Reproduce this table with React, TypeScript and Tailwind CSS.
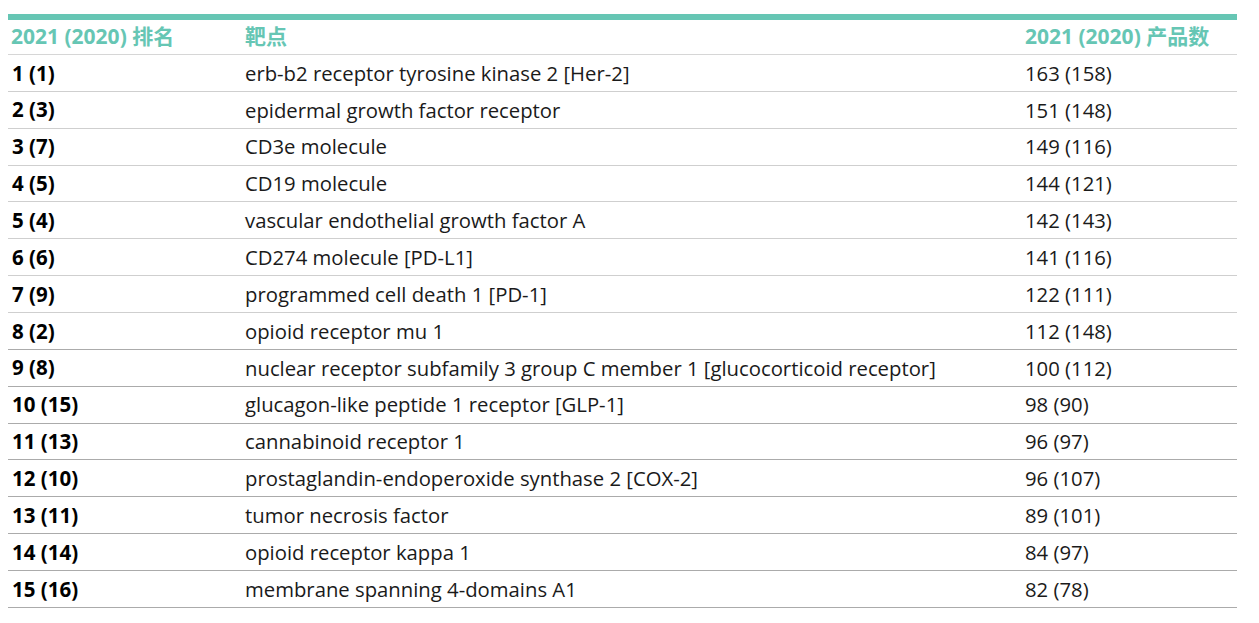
const rows: [string, string, string][] = [
  ['1 (1)', 'erb-b2 receptor tyrosine kinase 2 [Her-2]', '163 (158)'],
  ['2 (3)', 'epidermal growth factor receptor', '151 (148)'],
  ['3 (7)', 'CD3e molecule', '149 (116)'],
  ['4 (5)', 'CD19 molecule', '144 (121)'],
  ['5 (4)', 'vascular endothelial growth factor A', '142 (143)'],
  ['6 (6)', 'CD274 molecule [PD-L1]', '141 (116)'],
  ['7 (9)', 'programmed cell death 1 [PD-1]', '122 (111)'],
  ['8 (2)', 'opioid receptor mu 1', '112 (148)'],
  ['9 (8)', 'nuclear receptor subfamily 3 group C member 1 [glucocorticoid receptor]', '100 (112)'],
  ['10 (15)', 'glucagon-like peptide 1 receptor [GLP-1]', '98 (90)'],
  ['11 (13)', 'cannabinoid receptor 1', '96 (97)'],
  ['12 (10)', 'prostaglandin-endoperoxide synthase 2 [COX-2]', '96 (107)'],
  ['13 (11)', 'tumor necrosis factor', '89 (101)'],
  ['14 (14)', 'opioid receptor kappa 1', '84 (97)'],
  ['15 (16)', 'membrane spanning 4-domains A1', '82 (78)'],
];

export default function App() {
  return (
    <div
      className="bg-white w-[1259px] h-[623px] pt-[14px] pl-[8px]"
      style={{ fontFamily: '"Open Sans", "Noto Sans CJK SC", sans-serif' }}
    >
      <div className="w-[1229px] border-t-[6px] border-[#66c6b4]">
        {/* header */}
        <div className="flex h-[35px] items-center border-b border-[#d6d6d6] text-[21px] font-bold text-[#66c6b4]">
          <div className="w-[237px] pl-[3px]">2021 (2020) 排名</div>
          <div className="w-[780px]">靶点</div>
          <div className="flex-1">2021 (2020) 产品数</div>
        </div>
        {rows.map(([rank, target, count], i) => (
          <div
            key={i}
            className={`flex h-[36.87px] items-center border-b text-[20.3px] text-[#1a1a1a] ${
              i < 7 ? 'border-[#cfcfcf]' : 'border-[#ababab]'
            }`}
          >
            <div className="w-[237px] pl-[4px] text-[20.5px] font-bold text-black">{rank}</div>
            <div className="w-[780px] whitespace-nowrap">{target}</div>
            <div className="flex-1">{count}</div>
          </div>
        ))}
      </div>
    </div>
  );
}
